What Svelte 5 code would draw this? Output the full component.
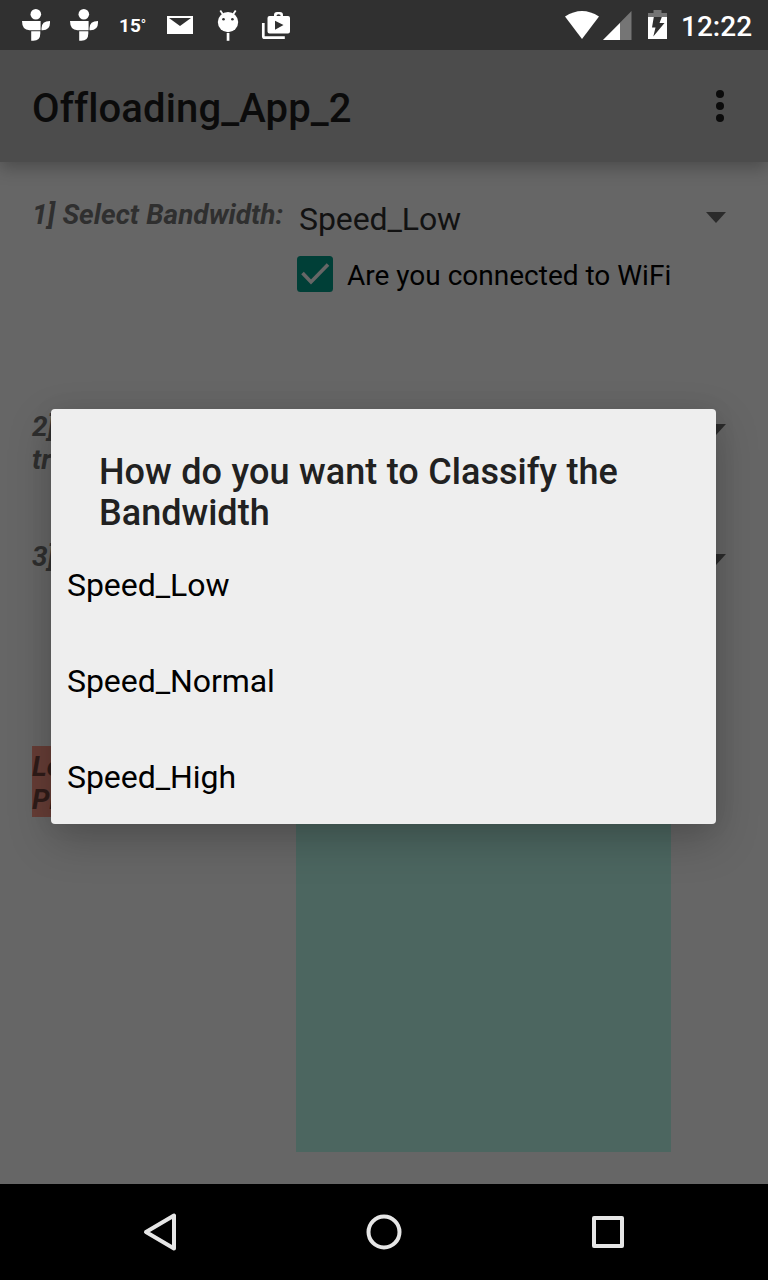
<script>
  const options = ['Speed_Low', 'Speed_Normal', 'Speed_High'];
</script>

{#snippet figure()}
  <svg width="32" height="34" viewBox="0 0 32 34" fill="#fff">
    <circle cx="15.8" cy="6.3" r="5.3" />
    <path d="M2 13h18.600v9.300H9.500Q2 22 2 13ZM21.500 22.300v-2q0-7.300 8.500-7.300v1.800q0 7.500-7.500 7.500ZM11.200 23.300H20.300v2.200q0 7.300-7 7.300h-2.100Z" />
  </svg>
{/snippet}

{#snippet arrow()}
  <svg class="arrow" width="20" height="11" viewBox="0 0 20 11"><path d="M0 0h20L10 11Z" /></svg>
{/snippet}

<div class="screen">
  <header class="status">
    <div class="notes">
      {@render figure()}
      {@render figure()}
      <span class="temp">15<i>°</i></span>
      <svg width="32" height="34" viewBox="0 0 32 34"><path fill="#fff" d="M3 8h26v18H3Z" /><path d="m5 10 11 8 11-8" fill="#303030" /></svg>
      <svg width="32" height="34" viewBox="0 0 32 34"><g stroke="#fff" stroke-width="1.800"><path d="m11 6.500-2.700-4M21 6.500l2.700-4" /></g><circle cx="16" cy="14.100" r="10.200" fill="#fff" /><path d="M14.700 25h2.700v7.800h-2.700Z" fill="#fff" /><circle cx="11.500" cy="11.300" r="1.300" fill="#303030" /><circle cx="20.400" cy="11.300" r="1.300" fill="#303030" /></svg>
      <svg width="32" height="34" viewBox="0 0 32 34"><path d="M3.300 15v13.200q0 1.500 1.500 1.500h20" fill="none" stroke="#fff" stroke-width="2.700" /><path fill="#fff" fill-rule="evenodd" d="M14 8V7q0-3 3-3h3q3 0 3 3v1h5q2 0 2 2v13.500q0 2-2 2H9.500q-2 0-2-2V10q0-2 2-2Zm2.500 0h4.200Q20.700 6.200 18.600 6.200T16.500 8ZM15 12.700v9l8.500-4.600Z" /></svg>
    </div>
    <div class="system">
      <svg class="wifi" width="36" height="30" viewBox="0 0 36 30"><path fill="#fff" d="M1 6.500Q18-4.500 35 6.500L18 29Z" /></svg>
      <svg class="signal" width="29" height="29" viewBox="0 0 29 29"><path d="M28.500 0v29H0Z" fill="#757575" /><path d="M17 12v17H0Z" fill="#fff" /></svg>
      <svg class="battery" width="19" height="29" viewBox="0 0 19 29"><path fill="#757575" d="M5.500 0h8v3H19v5H0V3h5.500Z" /><path fill="#fff" d="M0 7h19v22H0Z" /><path fill="#303030" d="M5.800 7h8l-2.300 6h5L5.300 26.500 7.500 17.500H4Z" /></svg>
      <time>12:22</time>
    </div>
  </header>

  <div class="appbar">
    <h1>Offloading_App_2</h1>
    <svg width="8" height="32" viewBox="0 0 8 32" fill="#0b0b0b"><circle cx="4" cy="4" r="4" /><circle cx="4" cy="16" r="4" /><circle cx="4" cy="28" r="4" /></svg>
  </div>

  <main>
    <section class="row first">
      <div class="label">1] Select Bandwidth:</div>
      <div class="field">
        <div class="spinner"><span>Speed_Low</span>{@render arrow()}</div>
        <div class="check">
          <svg width="36" height="36" viewBox="0 0 36 36"><rect width="36" height="36" rx="3.500" fill="#003f37" /><path d="m5.500 17 8.500 9L31 8.500" fill="none" stroke="#666" stroke-width="3.600" /></svg>
          <span>Are you connected to WiFi</span>
        </div>
      </div>
    </section>
    <section class="row second"><div class="label">2]<br />tr</div>{@render arrow()}</section>
    <section class="row third"><div class="label">3]</div>{@render arrow()}</section>
    <section class="row result">
      <div class="label tinted">Lo<br />Pr</div>
      <div class="output"></div>
    </section>
  </main>

  <nav>
    <svg width="36" height="40" viewBox="0 0 36 40"><path d="M4 20 32 3.500v33Z" /></svg>
    <svg width="36" height="40" viewBox="0 0 36 40"><circle cx="18" cy="20" r="15.500" /></svg>
    <svg width="36" height="40" viewBox="0 0 36 40"><rect x="4" y="6" width="28" height="28" /></svg>
  </nav>

  <div class="dialog">
    <h2>How do you want to Classify the<br />Bandwidth</h2>
    <ul>
      {#each options as option}
        <li>{option}</li>
      {/each}
    </ul>
  </div>
</div>

<style>
  :global(body) { margin: 0; background: #000; }
  .screen { position: relative; width: 768px; height: 1280px; display: flex; flex-direction: column; overflow: hidden; background: #666; font-family: Roboto, sans-serif; font-variant-ligatures: none; }
  svg { display: block; flex: none; }
  .status { height: 50px; flex: none; box-sizing: border-box; display: flex; justify-content: space-between; padding: 8px 16px 0 20px; background: #303030; color: #fff; z-index: 2; }
  .notes { display: flex; gap: 16px; }
  .temp { width: 32px; box-sizing: border-box; padding-left: 3px; font-size: 19px; line-height: 34px; font-weight: 700; white-space: nowrap; }
  .temp i { font-style: normal; font-weight: 500; font-size: 14px; vertical-align: 2px; }
  .system { display: flex; }
  .wifi { margin-top: 2px; }
  .signal { margin: 3px 0 0 3px; }
  .battery { margin: 2px 0 0 16px; }
  time { margin-left: 14px; font-size: 28px; line-height: 38px; font-weight: 500; width: 71px; white-space: nowrap; }
  .appbar { height: 112px; flex: none; box-sizing: border-box; padding: 0 44px 0 32px; display: flex; align-items: center; justify-content: space-between; background: #4c4c4c; box-shadow: 0 6px 16px rgba(0, 0, 0, .26); z-index: 1; }
  h1 { margin: 6px 0 0; font-size: 40px; line-height: 48px; font-weight: 500; letter-spacing: 0.13px; color: #0b0b0b; }
  main { flex: 1; display: flex; flex-direction: column; padding: 32px 42px 32px 32px; min-height: 0; }
  .row { display: flex; justify-content: space-between; }
  .label { font-size: 28px; line-height: 33px; font-style: italic; font-weight: 700; word-spacing: 0.4px; color: #2f2f2f; white-space: nowrap; }
  .first { height: 212px; }
  .first .label { width: 264px; padding-top: 4px; }
  .field { flex: 1; }
  .spinner { display: flex; justify-content: space-between; padding-left: 3px; height: 62px; font-size: 32px; line-height: 50px; letter-spacing: -0.1px; color: #121212; }
  .arrow { fill: #2b2b2b; margin-top: 18px; }
  .check { display: flex; align-items: center; gap: 14px; height: 36px; padding-left: 1px; font-size: 28px; color: #000; white-space: nowrap; }
  .check span { padding-top: 3px; }
  .second { height: 130px; }
  .third { height: 210px; }
  .second .label, .third .label { padding-top: 4px; }
  .result { flex: 1; justify-content: flex-start; }
  .tinted { box-sizing: border-box; width: 232px; height: 71px; padding-top: 4px; margin-right: 32px; background: #663d36; color: #2f1c19; }
  .output { width: 375px; background: #4c6660; }
  nav { height: 96px; flex: none; display: flex; justify-content: center; gap: 188px; align-items: center; background: #000; z-index: 3; }
  nav svg { fill: none; stroke: #e6e6e6; stroke-width: 4; stroke-linejoin: round; }
  .dialog { position: absolute; z-index: 2; left: 51px; top: 409px; width: 665px; height: 415px; box-sizing: border-box; padding-top: 43px; border-radius: 4px; background: #eee; box-shadow: 0 16px 44px rgba(0, 0, 0, .22), 0 0 24px rgba(0, 0, 0, .06); }
  h2 { margin: 0 48px; font-size: 36px; line-height: 41px; font-weight: 500; word-spacing: 0.65px; color: #212121; white-space: nowrap; }
  ul { list-style: none; margin: 3px 0 0; padding: 0 16px; }
  li { height: 96px; line-height: 96px; font-size: 32px; letter-spacing: -0.06px; color: #000; }
</style>
